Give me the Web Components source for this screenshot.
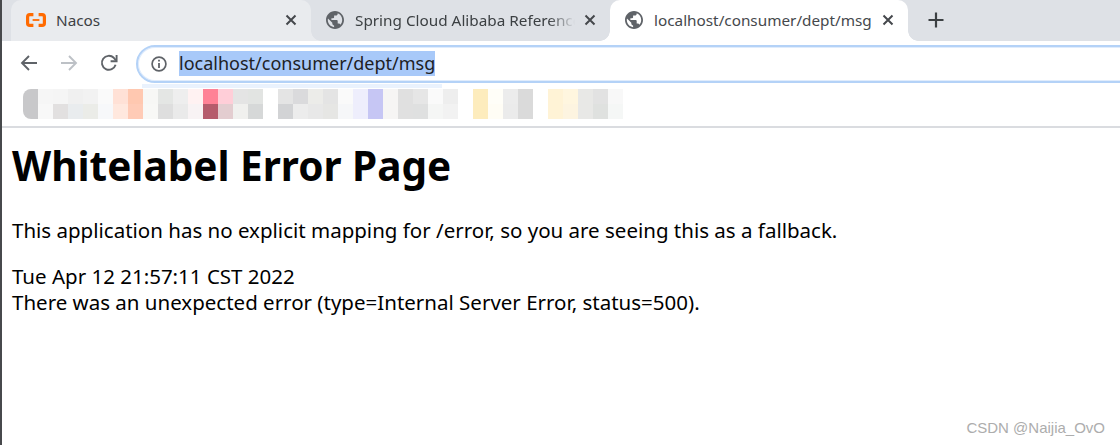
<!DOCTYPE html>
<html>
<head>
<meta charset="utf-8">
<title>Whitelabel Error Page</title>
<style>
  html, body { margin: 0; height: 100%; background: #fff; }
  body { overflow: hidden; font-family: "Noto Sans", sans-serif; }
</style>
</head>
<body>
<browser-window>
  <tab-strip slot="tabs">
    <browser-tab state="hover" icon="nacos" style="--w:300px">Nacos</browser-tab>
    <browser-tab state="back" icon="globe" fade style="--w:299px">Spring Cloud Alibaba Reference</browser-tab>
    <browser-tab state="active" icon="globe" style="--w:298px">localhost/consumer/dept/msg</browser-tab>
  </tab-strip>
  <nav-bar slot="nav" url="localhost/consumer/dept/msg"></nav-bar>
  <blurred-bookmarks slot="bookmarks"></blurred-bookmarks>
  <error-page>
    <h1 slot="title">Whitelabel Error Page</h1>
    <span slot="intro">This application has no explicit mapping for /error, so you are seeing this as a fallback.</span>
    <span slot="when">Tue Apr 12 21:57:11 CST 2022</span>
    <span slot="detail">There was an unexpected error (type=Internal Server Error, status=500).</span>
  </error-page>
</browser-window>

<script>
const GLOBE = 'M12 2C6.48 2 2 6.48 2 12s4.48 10 10 10 10-4.48 10-10S17.52 2 12 2zm-1 17.93c-3.95-.49-7-3.85-7-7.93 0-.62.08-1.21.21-1.79L9 15v1c0 1.1.9 2 2 2v1.93zm6.9-2.54c-.26-.81-1-1.39-1.9-1.39h-1v-3c0-.55-.45-1-1-1H8v-2h2c.55 0 1-.45 1-1V7h2c1.1 0 2-.9 2-2v-.41c2.93 1.19 5 4.06 5 7.41 0 2.08-.8 3.97-2.1 5.39z'

const ICONS = {
    globe: `<svg width="18" height="18" viewBox="2 2 20 20"><path fill="#5f6368" d="${GLOBE}"/></svg>`,
    nacos: `<svg width="20" height="14" viewBox="0 0 20 14" fill="none" stroke="#ff6a00" stroke-width="3.2">
        <path d="M7.4 1.6H3.8Q1.6 1.6 1.6 3.8V10.2Q1.6 12.4 3.8 12.4H7.4"/>
        <path d="M12.6 1.6H16.2Q18.4 1.6 18.4 3.8V10.2Q18.4 12.4 16.2 12.4H12.6"/>
        <path d="M6.6 7H13.4" stroke-width="1.8"/>
    </svg>`
}

class BrowserWindow extends HTMLElement {
    constructor() {
        super()
        this.attachShadow({ mode: 'open' })
        this.shadowRoot.innerHTML = `
            <style>
                :host { display: flex; flex-direction: column; height: 445px; border-left: 2px solid #47494c; box-sizing: border-box; }
                .rule { height: 2px; background: #dadce0; }
            </style>
            <slot name="tabs"></slot>
            <slot name="nav"></slot>
            <slot name="bookmarks"></slot>
            <div class="rule"></div>
            <slot></slot>
        `
    }
}

class TabStrip extends HTMLElement {
    constructor() {
        super()
        this.attachShadow({ mode: 'open' })
        this.shadowRoot.innerHTML = `
            <style>
                :host { display: flex; height: 41px; padding-left: 9px; background: #dee1e6; }
                .new { width: 56px; display: flex; align-items: center; justify-content: center; padding-bottom: 2px; box-sizing: border-box; }
            </style>
            <slot></slot>
            <div class="new">
                <svg width="16" height="16" viewBox="0 0 16 16"><path d="M8 0.5V15.5M0.5 8H15.5" stroke="#3c4043" stroke-width="2.2"/></svg>
            </div>
        `
    }
}

class BrowserTab extends HTMLElement {
    constructor() {
        super()
        this.attachShadow({ mode: 'open' })
        const icon = ICONS[this.getAttribute('icon')]
        this.shadowRoot.innerHTML = `
            <style>
                :host {
                    display: flex; align-items: center; box-sizing: border-box; flex: none;
                    width: var(--w); height: 41px; padding: 0 13px 2px 15px; position: relative;
                    font: 15.3px "Noto Sans", sans-serif; color: #3c4043;
                }
                :host([state=hover]) { background: #e9ebee; border-radius: 10px 10px 0 0; }
                :host([state=back]) { background: #dee1e6; }
                :host([state=active]) { background: #fff; color: #45484c; border-radius: 10px 10px 0 0; }
                /* concave corners where a tab meets its neighbour */
                :host([state=back])::before, :host([state=back])::after, :host([state=active])::after {
                    content: ""; position: absolute; bottom: 0; width: 10px; height: 10px;
                }
                :host([state=back])::before { left: 0; background: radial-gradient(circle at 100% 0, transparent 9.5px, #e9ebee 10px); }
                :host([state=back])::after { right: 0; background: radial-gradient(circle at 0 0, transparent 9.5px, #fff 10px); }
                :host([state=active])::after { left: 100%; background: radial-gradient(circle at 100% 0, transparent 9.5px, #fff 10px); }
                .icon { width: 20px; display: flex; justify-content: flex-start; margin-right: 9px; flex: none; }
                :host([icon=nacos]) .icon { margin-right: 10px; }
                .label { flex: 1; min-width: 0; overflow: hidden; white-space: nowrap; }
                :host([fade]) .label { -webkit-mask-image: linear-gradient(to right, #000 88%, transparent 100%); }
                .close { width: 14px; height: 14px; flex: none; margin-left: 8px; }
            </style>
            <span class="icon">${icon}</span>
            <span class="label"><slot></slot></span>
            <svg class="close" viewBox="0 0 14 14"><path d="M2.5 2.5L11.5 11.5M11.5 2.5L2.5 11.5" stroke="#45484c" stroke-width="2"/></svg>
        `
    }
}

class NavBar extends HTMLElement {
    constructor() {
        super()
        this.attachShadow({ mode: 'open' })
        this.shadowRoot.innerHTML = `
            <style>
                :host { display: flex; align-items: center; height: 43px; background: #fff; padding-left: 18px; box-sizing: border-box; }
                svg { flex: none; display: block; }
                .btns { display: flex; gap: 22px; align-items: center; width: 116px; flex: none; }
                .omni {
                    flex: 1; height: 38px; box-sizing: border-box; margin: 3px -40px 0 0;
                    border: 2px solid #b4d2f7; box-shadow: inset 0 0 0 1px #e0ecfc; border-radius: 19px; background: #fff;
                    display: flex; align-items: center; padding: 0 0 1px 13px;
                }
                .url {
                    margin-left: 12px; font: 18px/25px "Noto Sans", sans-serif; color: #202124;
                    background: #a8c9f9; white-space: nowrap;
                }
            </style>
            <div class="btns">
                <svg width="18" height="18" viewBox="0 0 18 18" fill="none" stroke="#5f6368" stroke-width="1.9"><path d="M17 9H2M9 2L2 9L9 16"/></svg>
                <svg width="18" height="18" viewBox="0 0 18 18" fill="none" stroke="#bdc1c6" stroke-width="1.9"><path d="M1 9H16M9 2L16 9L9 16"/></svg>
                <svg width="18" height="18" viewBox="0 0 18 18" fill="none" stroke="#5f6368" stroke-width="1.9"><path d="M15.6 10.8A7 7 0 1 1 13.8 3.8L16 6.4"/><path d="M16.6 1V7.2H10.6" fill="none"/></svg>
            </div>
            <div class="omni">
                <svg width="16" height="16" viewBox="0 0 16 16" fill="none"><circle cx="8" cy="8" r="6.9" stroke="#5f6368" stroke-width="1.7"/><path d="M8 7V12" stroke="#5f6368" stroke-width="1.8"/><path d="M8 3.7V5.5" stroke="#5f6368" stroke-width="1.8"/></svg>
                <span class="url">${this.getAttribute('url')}</span>
            </div>
        `
    }
}

// mosaic cells as they appear in the shot, left to right
const MOSAIC_TOP = ['c8c8ca','f6f6f6','f5f5f5','f0f0f0','f2f2f2','fafafa','ffe1d6','ffc8b0','f7f7f5','e4e6e4','eeeeee','fff2f2','ff8296','ffced8','e4e4e4','e2e4e2','ffffff','e4e4e4','dadadc','ecece9','e4e4e4','fafafa','eeeefc','c6c6f4','f6f5f4','e0e0e0','e6e6e6','fafafa','eeeeee','ffffff','fdecbd','fffef8','ececec','dadada','ffffff','fff3d6','fff6df','e8e8e6','e2e2e2','f8f8f8']
const MOSAIC_BOTTOM = ['c8c8ca','f8f8f8','e2e0e0','e9ecee','ebece8','f7f8fa','ffe8de','ffcbb6','f8f8f6','dedede','eaeaea','f8f3f4','b55c6c','e3cdd0','f0f0ee','d6d8d8','ffffff','d2d3d5','ececec','e8e8e8','e6e6e4','f6f7f9','eeeefc','c6c6f4','f6f5f4','e0e0e0','dfe0e0','f5f6f5','f2f2f2','ffffff','fdecbd','fffdf5','ebebeb','dadada','ffffff','fff3d6','fdf4e0','e8e8e6','dfe1df','f5f7f6']

class BlurredBookmarks extends HTMLElement {
    constructor() {
        super()
        this.attachShadow({ mode: 'open' })
        const cells = [...MOSAIC_TOP, ...MOSAIC_BOTTOM].map(c => `<i style="background:#${c}"></i>`).join('')
        this.shadowRoot.innerHTML = `
            <style>
                :host { display: block; height: 42px; box-sizing: border-box; padding: 5px 0 0 21px; background: #fff; position: relative; }
                :host::before { content: ""; position: absolute; left: 140px; top: 0; width: 300px; height: 4px; background: #eaf2fd; }
                .grid { display: grid; grid-template-columns: repeat(40, 15px); grid-auto-rows: 15px; width: 600px; border-radius: 8px 0 0 8px; overflow: hidden; }
            </style>
            <div class="grid">${cells}</div>
        `
    }
}

class ErrorPage extends HTMLElement {
    constructor() {
        super()
        this.attachShadow({ mode: 'open' })
        this.shadowRoot.innerHTML = `
            <style>
                :host { display: block; padding: 11px 10px 0; color: #000; font: 20.5px/26px "Noto Sans", sans-serif; position: relative; flex: 1; }
                ::slotted(h1) { margin: 0 0 24px; font: 700 40.5px/54px "Noto Sans", sans-serif; }
                .intro { margin-bottom: 20px; }
                .line { display: block; }
                .mark { position: absolute; right: 15px; bottom: 9px; font: 15px "Liberation Sans", sans-serif; color: #adadad; }
            </style>
            <slot name="title"></slot>
            <div class="intro"><slot name="intro"></slot></div>
            <div class="line"><slot name="when"></slot></div>
            <div class="line"><slot name="detail"></slot></div>
            <div class="mark">CSDN @Naijia_OvO</div>
        `
    }
}

customElements.define('browser-window', BrowserWindow)
customElements.define('tab-strip', TabStrip)
customElements.define('browser-tab', BrowserTab)
customElements.define('nav-bar', NavBar)
customElements.define('blurred-bookmarks', BlurredBookmarks)
customElements.define('error-page', ErrorPage)
</script>
</body>
</html>
